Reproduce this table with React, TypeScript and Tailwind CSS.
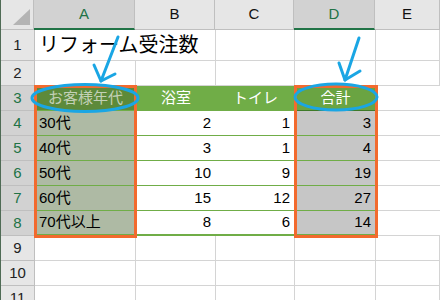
import React from "react";

const font = { fontFamily: '"Liberation Sans", "Noto Sans CJK JP", sans-serif' };

const cols = ["w-[101px]", "w-[80px]", "w-[79px]", "w-[81px]", "flex-1"];

const data = [
  { label: "30代", b: 2, c: 1, d: 3 },
  { label: "40代", b: 3, c: 1, d: 4 },
  { label: "50代", b: 10, c: 9, d: 19 },
  { label: "60代", b: 15, c: 12, d: 27 },
  { label: "70代以上", b: 8, c: 6, d: 14 },
];

function RowHead({ n, sel }: { n: number; sel?: boolean }) {
  return (
    <div
      className={`w-[34px] shrink-0 flex items-center justify-center border-r border-b border-[#bfbfbf] text-[15px] ${
        sel ? "bg-[#d2d2d2] text-[#217346]" : "bg-[#e6e6e6] text-[#222]"
      }`}
    >
      {n}
    </div>
  );
}

function EmptyRow({ n, h }: { n: number; h: string }) {
  return (
    <div className={`flex ${h}`}>
      <RowHead n={n} />
      {cols.map((c, i) => (
        <div key={i} className={`${c} shrink-0 border-r border-b border-[#d4d4d4] bg-white`} />
      ))}
    </div>
  );
}

export default function App() {
  return (
    <div className="relative w-[440px] h-[300px] overflow-hidden bg-white border-l border-[#4f6b55]" style={font}>
      {/* column headers */}
      <div className="flex h-[30px]">
        <div className="relative w-[33px] shrink-0 bg-[#e6e6e6] border-r border-b border-[#bfbfbf]">
          <div className="absolute right-[3px] bottom-[4px] w-0 h-0 border-l-[17px] border-l-transparent border-b-[16px] border-b-[#b4b4b4]" />
        </div>
        {["A", "B", "C", "D", "E"].map((l, i) => {
          const sel = l === "A" || l === "D";
          return (
            <div
              key={l}
              className={`${cols[i]} shrink-0 flex items-center justify-center text-[15px] border-r border-[#bfbfbf] ${
                sel
                  ? "bg-[#d2d2d2] text-[#217346] border-b-2 border-b-[#217346]"
                  : "bg-[#e6e6e6] text-[#111] border-b border-b-[#bfbfbf]"
              }`}
            >
              {l}
            </div>
          );
        })}
      </div>

      {/* row 1 */}
      <div className="flex h-[31px]">
        <RowHead n={1} />
        <div className="w-[101px] shrink-0 border-b border-[#d4d4d4] flex items-center pl-[4px] text-[20px] whitespace-nowrap text-black">
          リフォーム受注数
        </div>
        {cols.slice(1).map((c, i) => (
          <div key={i} className={`${c} shrink-0 border-r border-b border-[#d4d4d4]`} />
        ))}
      </div>

      <EmptyRow n={2} h="h-[25px]" />

      {/* row 3: table header */}
      <div className="flex h-[25px]">
        <RowHead n={3} sel />
        <div className="w-[101px] shrink-0 bg-[#5d8a3a] text-[#c3d0b6] flex items-center justify-center text-[15px] border-b border-[#70ad47]">
          お客様年代
        </div>
        <div className="w-[80px] shrink-0 bg-[#70ad47] text-white flex items-center justify-center text-[15px] border-b border-[#70ad47]">
          浴室
        </div>
        <div className="w-[79px] shrink-0 bg-[#70ad47] text-white flex items-center justify-center text-[15px] border-b border-[#70ad47]">
          トイレ
        </div>
        <div className="w-[81px] shrink-0 bg-[#6aa442] text-white flex items-center justify-center text-[15px] border border-[#3e7a28]">
          合計
        </div>
        <div className="flex-1 border-b border-[#d4d4d4]" />
      </div>

      {/* data rows */}
      {data.map((r, i) => {
        const last = i === data.length - 1;
        const line = last ? "border-b-2 border-[#70ad47]" : "border-b border-[#70ad47]";
        return (
          <div key={r.label} className="flex h-[25px]">
            <RowHead n={i + 4} sel />
            <div className={`w-[101px] shrink-0 bg-[#aebaa4] flex items-center pl-[4px] text-[15px] text-black ${line}`}>
              {r.label}
            </div>
            <div className={`w-[80px] shrink-0 bg-white flex items-center justify-end pr-[5px] text-[15px] text-black ${line}`}>
              {r.b}
            </div>
            <div className={`w-[79px] shrink-0 bg-white flex items-center justify-end pr-[5px] text-[15px] text-black ${line}`}>
              {r.c}
            </div>
            <div className={`w-[81px] shrink-0 bg-[#c6c6c6] flex items-center justify-end pr-[5px] text-[15px] text-black ${line}`}>
              {r.d}
            </div>
            <div className="flex-1 border-b border-[#d4d4d4]" />
          </div>
        );
      })}

      <EmptyRow n={9} h="h-[25px]" />
      <EmptyRow n={10} h="h-[25px]" />
      <EmptyRow n={11} h="h-[25px]" />

      {/* selection frames */}
      <div className="absolute left-[33px] top-[85px] w-[103px] h-[153px] border-[3px] border-[#f26a2e]" />
      <div className="absolute left-[293px] top-[85px] w-[84px] h-[153px] border-[3px] border-[#f26a2e]" />

      {/* callouts */}
      <svg className="absolute left-0 top-0" width="440" height="300" viewBox="0 0 440 300">
        <g fill="none" stroke="#1aa6e4" strokeWidth="3" strokeLinecap="round" strokeLinejoin="round">
          <ellipse cx="84" cy="98" rx="53" ry="13.5" />
          <path d="M117 37 L100 81" />
          <path d="M93 65 L100 81 L114 74" />
          <ellipse cx="335" cy="97" rx="41" ry="13" />
          <path d="M358 38 L344 80" />
          <path d="M338 63 L344 80 L359 71" />
        </g>
      </svg>
    </div>
  );
}
